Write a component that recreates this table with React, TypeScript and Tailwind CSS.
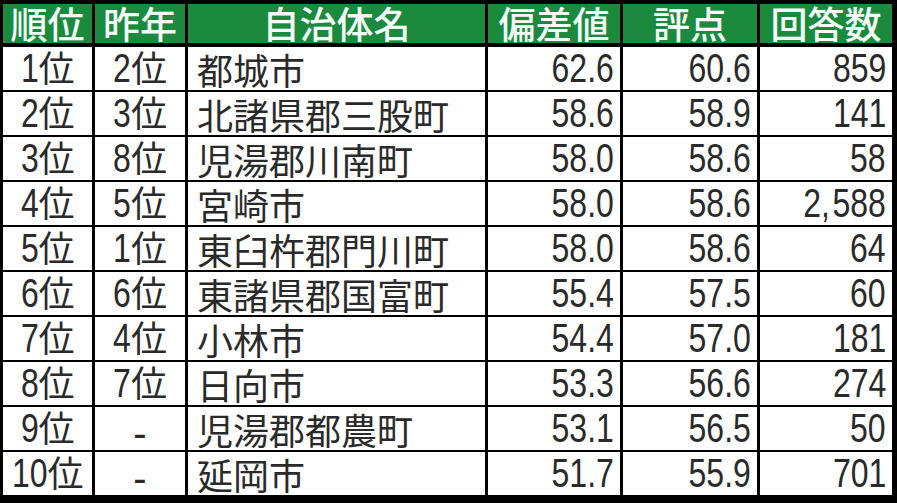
import React from 'react';

type Row = {
    rank: string;
    prev: string | null;
    name: string;
    dev: string;
    score: string;
    count: string;
};

const rows: Row[] = [
    { rank: '1', prev: '2', name: '都城市', dev: '62.6', score: '60.6', count: '859' },
    { rank: '2', prev: '3', name: '北諸県郡三股町', dev: '58.6', score: '58.9', count: '141' },
    { rank: '3', prev: '8', name: '児湯郡川南町', dev: '58.0', score: '58.6', count: '58' },
    { rank: '4', prev: '5', name: '宮崎市', dev: '58.0', score: '58.6', count: '2,588' },
    { rank: '5', prev: '1', name: '東臼杵郡門川町', dev: '58.0', score: '58.6', count: '64' },
    { rank: '6', prev: '6', name: '東諸県郡国富町', dev: '55.4', score: '57.5', count: '60' },
    { rank: '7', prev: '4', name: '小林市', dev: '54.4', score: '57.0', count: '181' },
    { rank: '8', prev: '7', name: '日向市', dev: '53.3', score: '56.6', count: '274' },
    { rank: '9', prev: null, name: '児湯郡都農町', dev: '53.1', score: '56.5', count: '50' },
    { rank: '10', prev: null, name: '延岡市', dev: '51.7', score: '55.9', count: '701' },
];

const cols = 'grid grid-cols-[89px_90px_297px_132px_134px_132px] gap-x-[3px]';
const cjk = "font-['Noto_Sans_CJK_JP',sans-serif]";
const num = "font-['Liberation_Sans',Arial,sans-serif] text-[41px] leading-none inline-block origin-right scale-x-[0.78]";

// digits are squeezed, so pull the group back by the space the squeeze leaves
const Digits: React.FC<{ value: string }> = ({ value }) => (
    <span className={num} style={{ marginLeft: `${-0.12 * value.length}em` }}>
        {value}
    </span>
);

const Place: React.FC<{ value: string | null }> = ({ value }) => (
    <div className="bg-white flex items-center justify-center text-[#2a2a2a]">
        {value === null ? (
            <span className="font-['Liberation_Sans',sans-serif] text-[40px] leading-none translate-y-[4px]">-</span>
        ) : (
            <div className="flex items-baseline">
                <Digits value={value} />
                <span className={`${cjk} text-[36px] leading-none`}>位</span>
            </div>
        )}
    </div>
);

const NumCell: React.FC<{ value: string }> = ({ value }) => {
    // the comma in the source font is set with wide spacing
    const parts = value.split(',');
    return (
        <div className="bg-white flex items-center justify-end pr-[6px] text-[#2a2a2a]">
            <span className={num}>
                {parts.length > 1 ? (
                    <>
                        {parts[0]}
                        <span className="tracking-[0.08em]">,</span>
                        {parts[1]}
                    </>
                ) : (
                    value
                )}
            </span>
        </div>
    );
};

const headers = ['順位', '昨年', '自治体名', '偏差値', '評点', '回答数'];

export default function App() {
    return (
        <div className="w-[897px] h-[503px] bg-black pt-[4px] pl-[3px] overflow-hidden">
            <div className={`${cols} h-[39px]`}>
                {headers.map((h) => (
                    <div
                        key={h}
                        className={`bg-[#1b8a3e] flex items-center justify-center text-[#f4fff9] ${cjk} text-[37px] font-medium leading-none`}
                    >
                        {h}
                    </div>
                ))}
            </div>
            <div className={`${cols} mt-[4px] grid-rows-[repeat(10,43px)] gap-y-[2px]`}>
                {rows.map((r) => (
                    <React.Fragment key={r.rank}>
                        <Place value={r.rank} />
                        <Place value={r.prev} />
                        <div className={`bg-white flex items-center pl-[9px] text-[#2a2a2a] ${cjk} text-[36px] leading-none`}>
                            {r.name}
                        </div>
                        <NumCell value={r.dev} />
                        <NumCell value={r.score} />
                        <NumCell value={r.count} />
                    </React.Fragment>
                ))}
            </div>
        </div>
    );
}
